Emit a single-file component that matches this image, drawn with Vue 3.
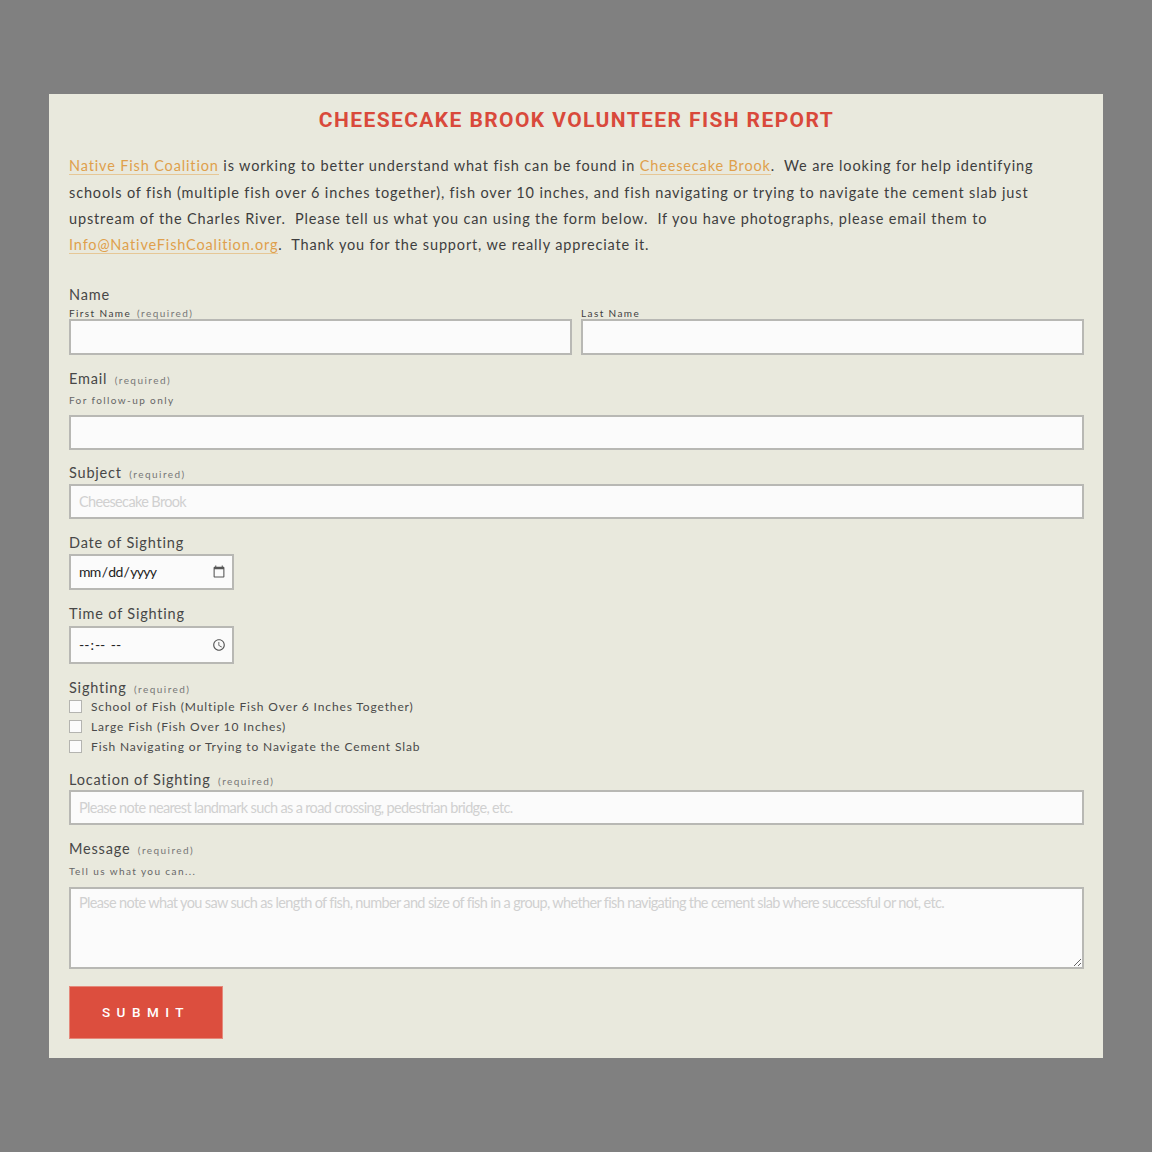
<script setup>
const sightingOptions = [
  "School of Fish (Multiple Fish Over 6 Inches Together)",
  "Large Fish (Fish Over 10 Inches)",
  "Fish Navigating or Trying to Navigate the Cement Slab",
];
</script>

<template>
  <div class="page">
    <form class="card" @submit.prevent>
      <h1>CHEESECAKE BROOK VOLUNTEER FISH REPORT</h1>
      <p class="intro">
        <a href="#">Native Fish Coalition</a> is working to better understand what fish can be found in
        <a href="#">Cheesecake Brook</a>.&nbsp; We are looking for help identifying schools of fish
        (multiple fish over 6 inches together), fish over 10 inches, and fish navigating or trying to
        navigate the cement slab just upstream of the Charles River.&nbsp; Please tell us what you can
        using the form below.&nbsp; If you have photographs, please email them to
        <a href="#">Info@NativeFishCoalition.org</a>.&nbsp; Thank you for the support, we really appreciate it.
      </p>

      <div class="field name-field">
        <div class="label">Name</div>
        <div class="name-row">
          <div>
            <div class="sublabel">First Name <span class="req">(required)</span></div>
            <input class="text name-input" type="text" />
          </div>
          <div>
            <div class="sublabel">Last Name</div>
            <input class="text name-input" type="text" />
          </div>
        </div>
      </div>

      <div class="field email-field">
        <div class="label">Email <span class="req">(required)</span></div>
        <div class="hint">For follow-up only</div>
        <input class="text" type="email" />
      </div>

      <div class="field subject-field">
        <div class="label">Subject <span class="req">(required)</span></div>
        <input class="text" type="text" placeholder="Cheesecake Brook" />
      </div>

      <div class="field date-field">
        <div class="label">Date of Sighting</div>
        <input class="text short" type="date" />
      </div>

      <div class="field time-field">
        <div class="label">Time of Sighting</div>
        <input class="text short time" type="time" />
      </div>

      <div class="field sighting-field">
        <div class="label">Sighting <span class="req">(required)</span></div>
        <label v-for="option in sightingOptions" :key="option" class="check">
          <input type="checkbox" />
          <span class="box"></span>
          {{ option }}
        </label>
      </div>

      <div class="field location-field">
        <div class="label">Location of Sighting <span class="req">(required)</span></div>
        <input
          class="text"
          type="text"
          placeholder="Please note nearest landmark such as a road crossing, pedestrian bridge, etc."
        />
      </div>

      <div class="field message-field">
        <div class="label">Message <span class="req">(required)</span></div>
        <div class="hint">Tell us what you can...</div>
        <textarea
          class="text area"
          placeholder="Please note what you saw such as length of fish, number and size of fish in a group, whether fish navigating the cement slab where successful or not, etc."
        ></textarea>
      </div>

      <button class="submit" type="submit">SUBMIT</button>
    </form>
  </div>
</template>

<style>
html,
body {
  margin: 0;
  background: #808080;
}
</style>

<style scoped>
.page {
  height: 1152px;
  padding-top: 94px;
  box-sizing: border-box;
  background: #808080;
  font-family: Lato, "Liberation Sans", sans-serif;
  color: #3e3e3e;
}
.card {
  box-sizing: border-box;
  width: 1054px;
  height: 964px;
  margin-left: 49px;
  padding: 0 19px 0 20px;
  background: #e9e9dd;
}
h1 {
  margin: 0;
  padding-top: 12.5px;
  font-family: Roboto, "Liberation Sans", sans-serif;
  font-size: 21px;
  line-height: 26px;
  font-weight: 700;
  letter-spacing: 1.4px;
  text-align: center;
  color: #d9493b;
}
.intro {
  margin: 20.9px 0 0;
  font-size: 14.5px;
  line-height: 26.3px;
  letter-spacing: 0.85px;
  width: 1000px;
}
.intro a {
  color: #dfa04c;
  text-decoration: none;
  border-bottom: 1px solid #e6c796;
}
.label {
  font-size: 14.5px;
  line-height: 18px;
  letter-spacing: 0.8px;
  color: #474747;
}
.req {
  margin-left: 3px;
  font-size: 10px;
  letter-spacing: 1.45px;
  color: #777;
}
.sublabel {
  margin-top: 3px;
  font-size: 10px;
  line-height: 12px;
  letter-spacing: 1.4px;
  color: #3e3e3e;
}
.sublabel .req {
  margin-left: 2px;
}
.hint {
  margin-top: 4px;
  font-size: 10px;
  line-height: 14px;
  letter-spacing: 1.4px;
  color: #666;
}
.text {
  display: block;
  box-sizing: border-box;
  width: 100%;
  height: 35px;
  margin: 0;
  padding: 0 8px;
  border: 2px solid #b8b8b4;
  border-radius: 0;
  outline: none;
  background: #fbfbfb;
  font-family: Lato, "Liberation Sans", sans-serif;
  font-size: 14.5px;
  letter-spacing: -0.65px;
  color: #222;
}
.text::placeholder {
  color: #d0d0d0;
  opacity: 1;
}
.name-field {
  margin-top: 27px;
}
.name-row {
  display: grid;
  grid-template-columns: 503px 503px;
  column-gap: 9px;
}
.name-input {
  height: 36px;
}
.email-field {
  margin-top: 15px;
}
.email-field .text {
  margin-top: 8px;
}
.subject-field {
  margin-top: 14px;
}
.subject-field .text {
  margin-top: 1px;
}
.date-field {
  margin-top: 15px;
}
.date-field .text {
  margin-top: 2px;
}
.time-field .text {
  margin-top: 3px;
}
.short {
  width: 165px;
  height: 36px;
  padding-left: 7px;
  padding-right: 6px;
  font-size: 14px;
  letter-spacing: -0.7px;
}
.short::-webkit-calendar-picker-indicator {
  width: 14px;
  height: 14px;
  margin: 0;
  padding: 0;
  opacity: 0.65;
}
.time-field {
  margin-top: 15px;
}
.time {
  height: 38px;
}
.sighting-field {
  margin-top: 15px;
}
.sighting-field .label {
  margin-bottom: -1px;
}
.check {
  display: flex;
  align-items: center;
  height: 20px;
  font-size: 12px;
  letter-spacing: 0.87px;
  color: #4a4a4a;
}
.check input {
  display: none;
}
.box {
  box-sizing: border-box;
  width: 13px;
  height: 13px;
  margin-right: 9px;
  border: 1px solid #b4b4b0;
  background: #fbfbfb;
}
.location-field {
  margin-top: 14px;
}
.location-field .text {
  margin-top: 0;
}
.message-field {
  margin-top: 15px;
}
.message-field .hint {
  margin-top: 5px;
}
.area {
  height: 82px;
  margin-top: 9px;
  padding: 5px 8px;
  resize: vertical;
}
.submit {
  display: block;
  width: 154px;
  height: 53px;
  margin-top: 17px;
  padding: 0;
  border: 1px solid #e5897b;
  background: #dc4e3e;
  color: #fff;
  font-family: Roboto, "Liberation Sans", sans-serif;
  font-size: 13.5px;
  font-weight: 500;
  letter-spacing: 6.5px;
}
</style>
